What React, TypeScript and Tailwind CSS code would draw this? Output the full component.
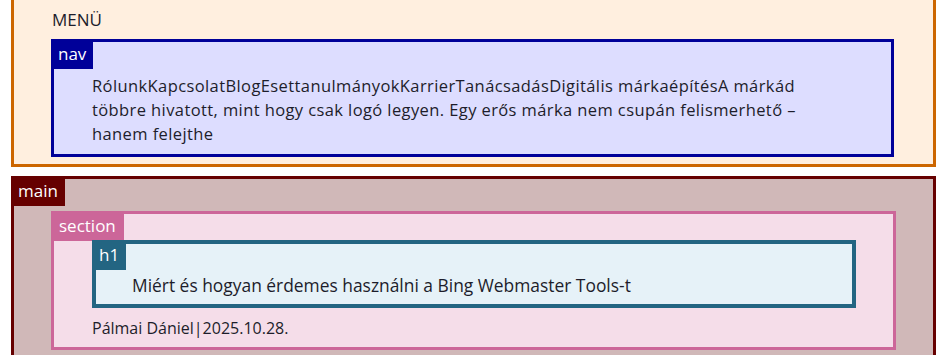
import React from "react";

function Tag({ label, className }: { label: string; className: string }) {
  return (
    <span className={`absolute h-[30px] px-[7px] text-[17px] leading-[30px] text-white ${className}`}>
      {label}
    </span>
  );
}

export default function App() {
  return (
    <div className="h-[355px] overflow-hidden bg-white font-['Open_Sans',sans-serif] text-[#1d1d2b]">
      <header className="ml-[11px] mr-[7px] flex flex-col border-[3px] border-t-0 border-[#cc6600] bg-[#ffefdf] pb-[7px] pl-[37px] pr-[39px]">
        <div className="pl-px pt-[6px] pb-[6px] text-[17px] leading-[27px]">MENÜ</div>
        <nav className="relative border-[3px] border-[#000099] bg-[#ddddff] pb-[8px] pl-[38px] pr-[38px] pt-[32px]">
          <Tag label="nav" className="-left-[3px] -top-[3px] bg-[#000099]" />
          <p className="text-[16.5px] leading-[24px] tracking-[0.4px]">
            <span className="block whitespace-nowrap">
              RólunkKapcsolatBlogEsettanulmányokKarrierTanácsadásDigitális márkaépítésA márkád
            </span>
            <span className="block whitespace-nowrap">
              többre hivatott, mint hogy csak logó legyen. Egy erős márka nem csupán felismerhető –
            </span>
            <span className="block whitespace-nowrap">hanem felejthe</span>
          </p>
        </nav>
      </header>

      <main className="relative ml-[11px] mr-[7px] mt-[9px] flex flex-col border-[3px] border-[#660000] bg-[#d0b8b8] px-[37px] pb-[40px] pt-[32px]">
        <Tag label="main" className="-left-[3px] -top-[3px] px-[6px] bg-[#660000]" />
        <section className="relative flex flex-col border-[3px] border-[#cc6699] bg-[#f5dde9] pb-[7px] pl-[38px] pr-[37px] pt-[26px]">
          <Tag label="section" className="-left-[3px] -top-[3px] px-[8px] bg-[#cc6699]" />
          <h1 className="relative border-[4px] border-[#236582] bg-[#e6f2f8] pb-[5px] pl-[36px] pt-[28px] text-[17.4px] leading-[27px]">
            <Tag label="h1" className="-left-[4px] -top-[4px] h-[28px] px-[6px] leading-[28px] bg-[#236582]" />
            Miért és hogyan érdemes használni a Bing Webmaster Tools-t
          </h1>
          <div className="mt-[8px] text-[16px] leading-[24px]">Pálmai Dániel|2025.10.28.</div>
        </section>
      </main>
    </div>
  );
}
